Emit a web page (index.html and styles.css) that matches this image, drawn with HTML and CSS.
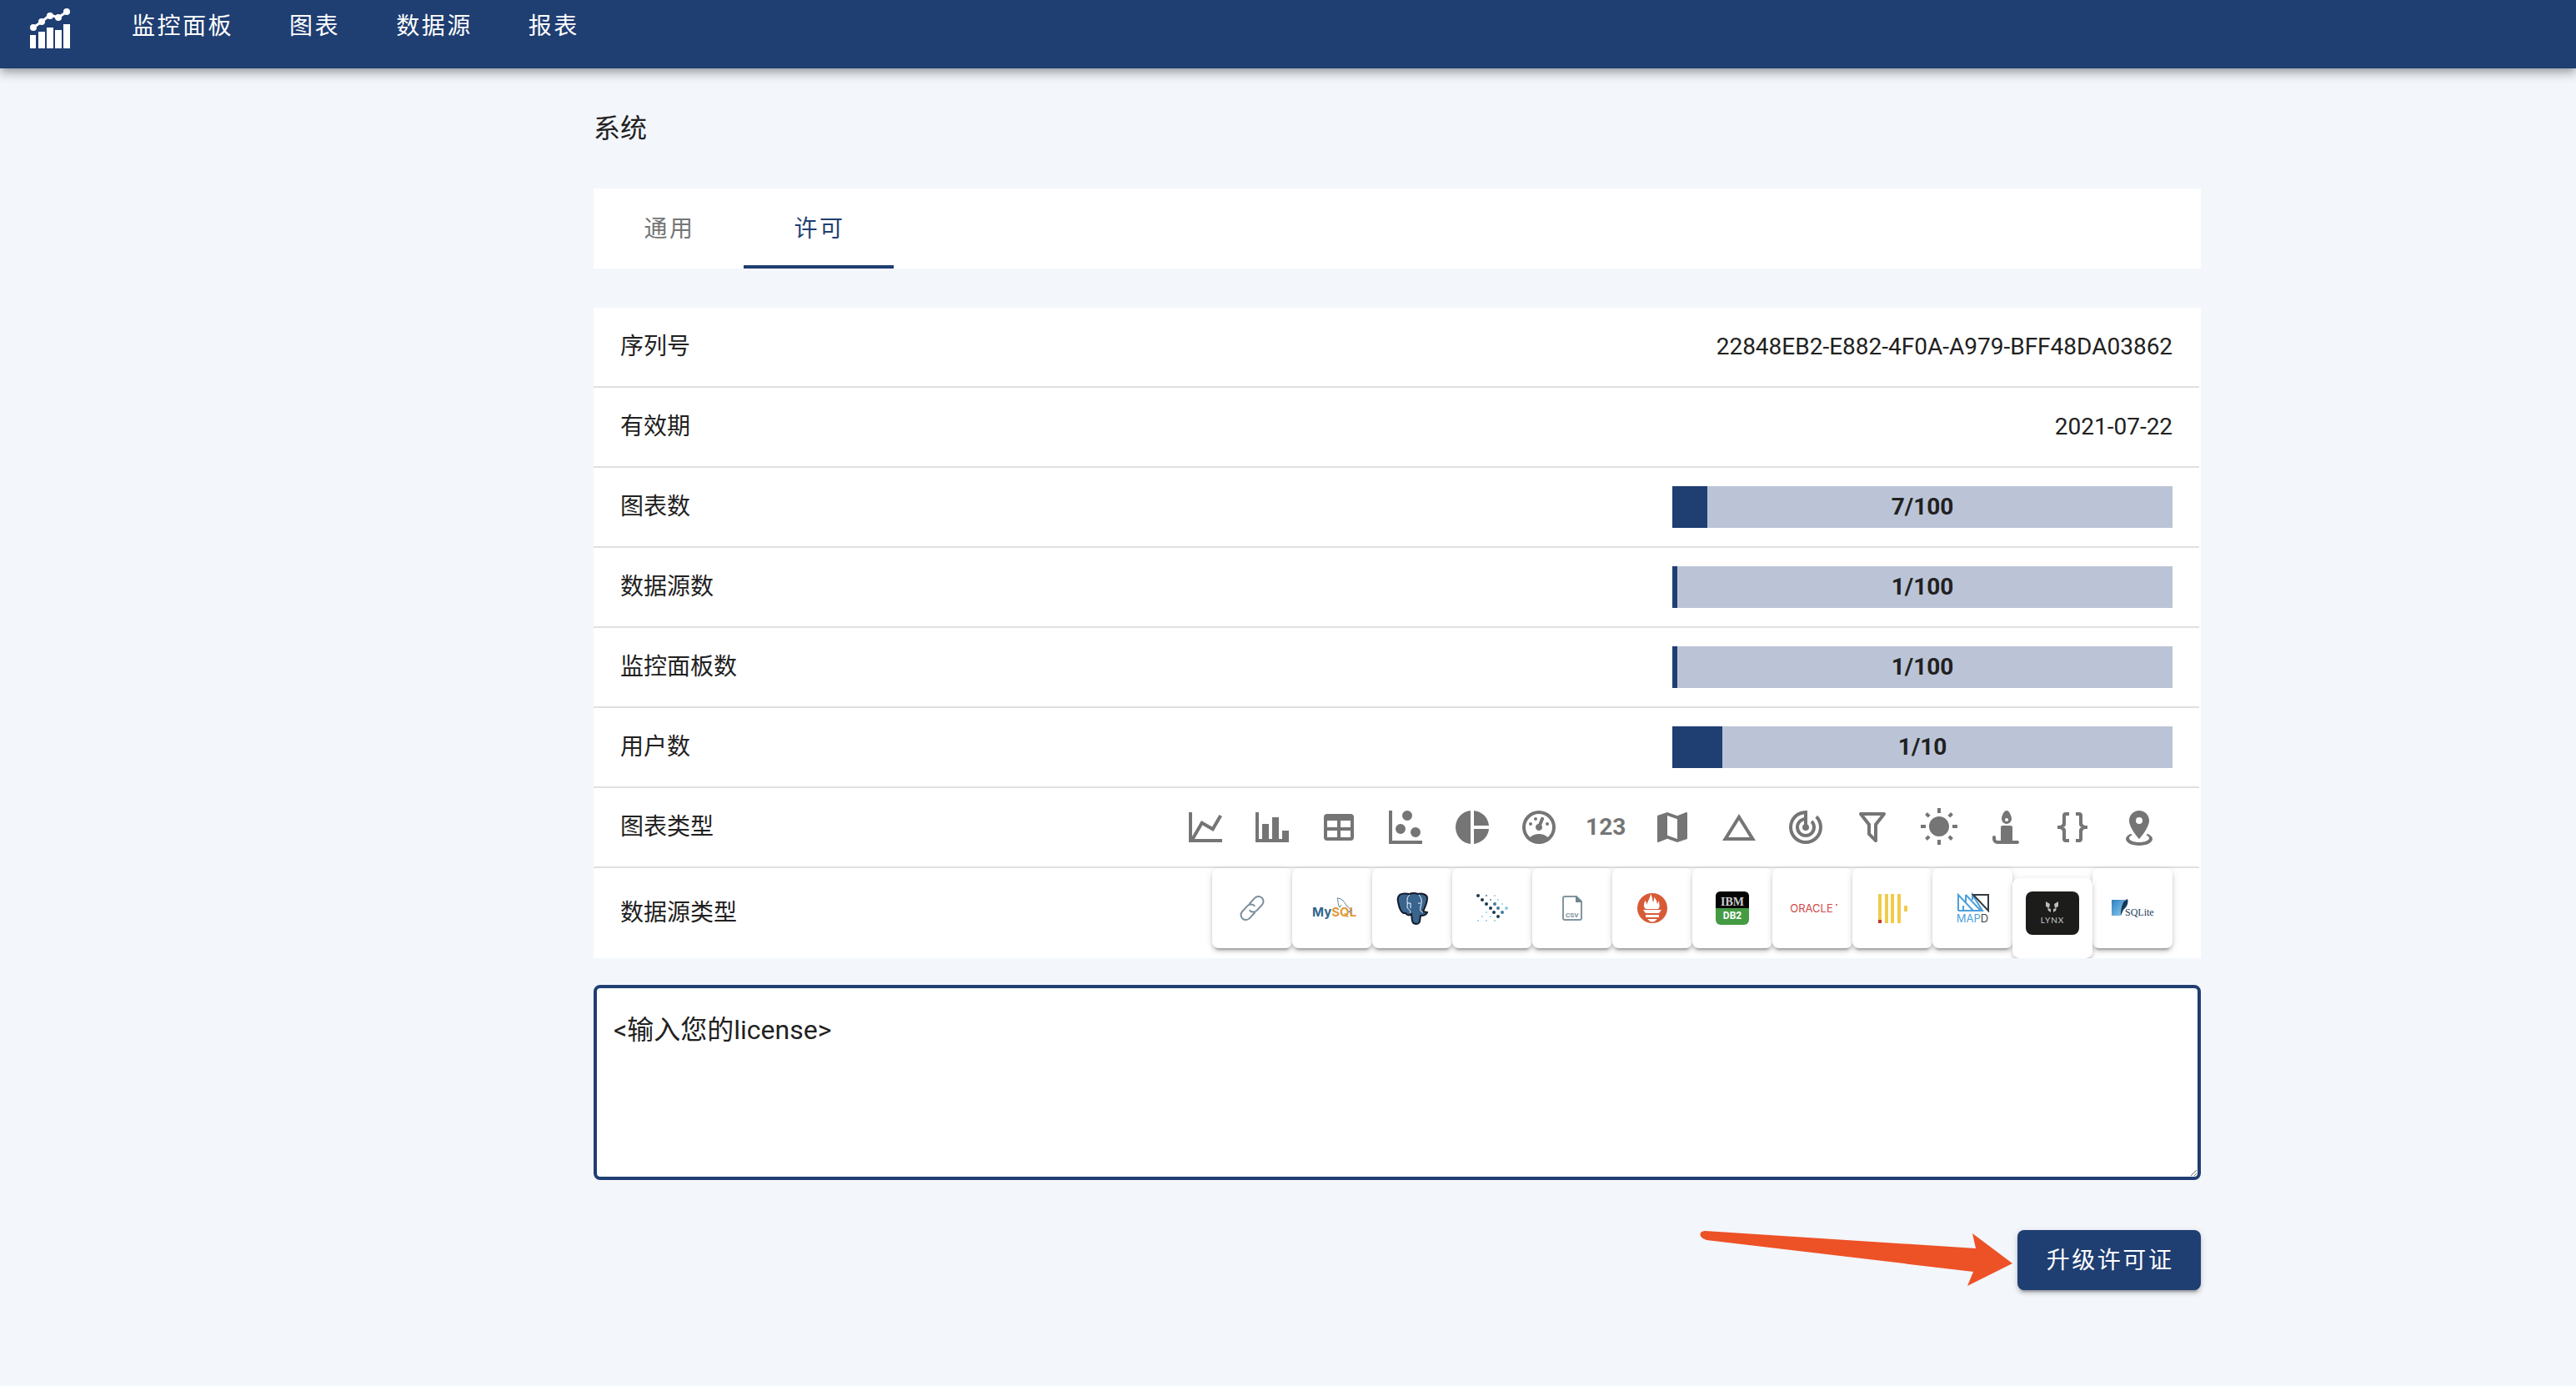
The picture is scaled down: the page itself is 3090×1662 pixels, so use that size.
FILE: index.html
```html
<!DOCTYPE html>
<html lang="zh-CN">
<head>
<meta charset="utf-8">
<meta name="viewport" content="width=device-width, initial-scale=1">
<title>系统</title>
<link rel="stylesheet" href="styles.css">
</head>
<body>
<header class="topbar">
  <a class="logo" href="#" aria-label="首页">
    <svg viewBox="0 0 48 48" fill="#fff"><path d="M0 32h7v16H0zM10 28h8v20h-8zM20 23h8v25h-8zM30 26h8v22h-8zM40 19h8v29h-8z"/><path d="M4 23L14 16L24 8L34 11L44 4" fill="none" stroke="#fff" stroke-width="3"/><circle cx="4" cy="23" r="4"/><circle cx="14" cy="16" r="4"/><circle cx="24" cy="9" r="4"/><circle cx="34" cy="11" r="4"/><circle cx="44" cy="4" r="4"/></svg>
  </a>
  <nav class="nav">
    <a href="#">监控面板</a>
    <a href="#">图表</a>
    <a href="#">数据源</a>
    <a href="#">报表</a>
  </nav>
</header>
<main class="page">
  <h1 class="title">系统</h1>
  <div class="tabs" role="tablist">
    <button class="tab" type="button" role="tab" aria-selected="false">通用</button>
    <button class="tab tab-active" type="button" role="tab" aria-selected="true">许可</button>
  </div>
  <dl class="info">
    <div class="row"><dt>序列号</dt><dd>22848EB2-E882-4F0A-A979-BFF48DA03862</dd></div>
    <div class="row"><dt>有效期</dt><dd>2021-07-22</dd></div>
    <div class="row"><dt>图表数</dt><dd class="meter"><span class="fill" style="width:7%"></span><span class="count">7/100</span></dd></div>
    <div class="row"><dt>数据源数</dt><dd class="meter"><span class="fill" style="width:1%"></span><span class="count">1/100</span></dd></div>
    <div class="row"><dt>监控面板数</dt><dd class="meter"><span class="fill" style="width:1%"></span><span class="count">1/100</span></dd></div>
    <div class="row"><dt>用户数</dt><dd class="meter"><span class="fill" style="width:10%"></span><span class="count">1/10</span></dd></div>
    <div class="row"><dt>图表类型</dt><dd class="charts">
      <svg viewBox="0 0 24 24"><path d="M16,11.78L20.24,4.45L21.97,5.45L16.74,14.5L10.23,10.75L5.46,19H22V21H2V3H4V17.54L9.5,8L16,11.78Z"/></svg>
      <svg viewBox="0 0 24 24"><path d="M22,21H2V3H4V19H6V10H10V19H12V6H16V19H18V14H22V21Z"/></svg>
      <svg viewBox="0 0 24 24"><path d="M5,4H19A2,2 0 0,1 21,6V18A2,2 0 0,1 19,20H5A2,2 0 0,1 3,18V6A2,2 0 0,1 5,4M5,8V12H11V8H5M13,8V12H19V8H13M5,14V18H11V14H5M13,14V18H19V14H13Z"/></svg>
      <svg viewBox="0 0 24 24"><path d="M2,2H4V20H22V22H2V2M9,10A3,3 0 0,1 12,13A3,3 0 0,1 9,16A3,3 0 0,1 6,13A3,3 0 0,1 9,10M13,2A3,3 0 0,1 16,5A3,3 0 0,1 13,8A3,3 0 0,1 10,5A3,3 0 0,1 13,2M18,12A3,3 0 0,1 21,15A3,3 0 0,1 18,18A3,3 0 0,1 15,15A3,3 0 0,1 18,12Z"/></svg>
      <svg viewBox="0 0 24 24"><path d="M11,2V22C5.9,21.5 2,17.2 2,12C2,6.8 5.9,2.5 11,2M13,2V11H22C21.5,6.2 17.8,2.5 13,2M13,13V22C17.7,21.5 21.5,17.8 22,13H13Z"/></svg>
      <svg viewBox="0 0 24 24"><path d="M12,2A10,10 0 0,0 2,12A10,10 0 0,0 12,22A10,10 0 0,0 22,12A10,10 0 0,0 12,2M12,4A8,8 0 0,1 20,12C20,14.4 19,16.5 17.3,18C15.9,16.7 14,16 12,16C10,16 8.2,16.7 6.7,18C5,16.5 4,14.4 4,12A8,8 0 0,1 12,4M14,5.89C13.62,5.9 13.26,6.15 13.1,6.54L11.81,9.77L11.71,10C11,10.13 10.41,10.6 10.14,11.26C9.73,12.29 10.23,13.45 11.26,13.86C12.29,14.27 13.45,13.77 13.86,12.74C14.12,12.08 14,11.32 13.57,10.76L13.67,10.5L14.96,7.29L14.97,7.26C15.17,6.75 14.92,6.17 14.41,5.96C14.28,5.91 14.15,5.89 14,5.89M10,6A1,1 0 0,0 9,7A1,1 0 0,0 10,8A1,1 0 0,0 11,7A1,1 0 0,0 10,6M7,9A1,1 0 0,0 6,10A1,1 0 0,0 7,11A1,1 0 0,0 8,10A1,1 0 0,0 7,9M17,9A1,1 0 0,0 16,10A1,1 0 0,0 17,11A1,1 0 0,0 18,10A1,1 0 0,0 17,9Z"/></svg>
      <span class="digits">123</span>
      <svg viewBox="0 0 24 24"><path d="M20.5,3L20.34,3.03L15,5.1L9,3L3.36,4.9C3.15,4.97 3,5.15 3,5.38V20.5A0.5,0.5 0 0,0 3.5,21L3.66,20.97L9,18.9L15,21L20.64,19.1C20.85,19.03 21,18.85 21,18.62V3.5A0.5,0.5 0 0,0 20.5,3M15,19L9,16.89V5L15,7.11V19Z"/></svg>
      <svg viewBox="0 0 24 24"><path d="M12,7.77L18.39,18H5.61L12,7.77M12,4L2,20H22L12,4Z"/></svg>
      <svg viewBox="0 0 24 24"><path d="M19.07,4.93L17.66,6.34C19.1,7.79 20,9.79 20,12A8,8 0 0,1 12,20A8,8 0 0,1 4,12C4,7.92 7.05,4.56 11,4.07V6.09C8.16,6.57 6,9.03 6,12A6,6 0 0,0 12,18A6,6 0 0,0 18,12C18,10.34 17.33,8.84 16.24,7.76L14.83,9.17C15.55,9.9 16,10.9 16,12A4,4 0 0,1 12,16A4,4 0 0,1 8,12C8,10.14 9.28,8.59 11,8.14V10.28C10.4,10.63 10,11.26 10,12A2,2 0 0,0 12,14A2,2 0 0,0 14,12C14,11.26 13.6,10.62 13,10.28V2H12A10,10 0 0,0 2,12A10,10 0 0,0 12,22A10,10 0 0,0 22,12C22,9.24 20.88,6.74 19.07,4.93Z"/></svg>
      <svg viewBox="0 0 24 24"><path d="M15,19.88C15.04,20.18 14.94,20.5 14.71,20.71C14.32,21.1 13.69,21.1 13.3,20.71L9.29,16.7C9.06,16.47 8.96,16.16 9,15.87V10.75L4.21,4.62C3.87,4.19 3.95,3.56 4.38,3.22C4.57,3.08 4.78,3 5,3H19C19.22,3 19.43,3.08 19.62,3.22C20.05,3.56 20.13,4.19 19.79,4.62L15,10.75V19.88M7.04,5L11,10.06V15.58L13,17.58V10.05L16.96,5H7.04Z"/></svg>
      <svg viewBox="0 0 24 24"><path d="M3.55,18.54L4.96,19.95L6.76,18.16L5.34,16.74M11,22.45C11.32,22.45 13,22.45 13,22.45V19.5H11M12,5.5A6,6 0 0,0 6,11.5A6,6 0 0,0 12,17.5A6,6 0 0,0 18,11.5C18,8.18 15.31,5.5 12,5.5M20,12.5H23V10.5H20M17.24,18.16L19.04,19.95L20.45,18.54L18.66,16.74M20.45,4.46L19.04,3.05L17.24,4.84L18.66,6.26M13,0.55H11V3.5H13M4,10.5H1V12.5H4M6.76,4.84L4.96,3.05L3.55,4.46L5.34,6.26L6.76,4.84Z"/></svg>
      <svg viewBox="0 0 24 24"><path d="M12.5,2C10.84,2 9.5,5.34 9.5,7A3,3 0 0,0 12.5,10A3,3 0 0,0 15.5,7C15.5,5.34 14.16,2 12.5,2M12.5,6.5A1,1 0 0,1 13.5,7.5A1,1 0 0,1 12.5,8.5A1,1 0 0,1 11.5,7.5A1,1 0 0,1 12.5,6.5M10,11A1,1 0 0,0 9,12V20H7A1,1 0 0,1 6,19V18A1,1 0 0,0 5,17A1,1 0 0,0 4,18V19A3,3 0 0,0 7,22H19A1,1 0 0,0 20,21A1,1 0 0,0 19,20H16V12A1,1 0 0,0 15,11H10Z"/></svg>
      <svg viewBox="0 0 24 24"><path d="M8,3A2,2 0 0,0 6,5V9A2,2 0 0,1 4,11H3V13H4A2,2 0 0,1 6,15V19A2,2 0 0,0 8,21H10V19H8V14A2,2 0 0,0 6,12A2,2 0 0,0 8,10V5H10V3M16,3A2,2 0 0,1 18,5V9A2,2 0 0,0 20,11H21V13H20A2,2 0 0,0 18,15V19A2,2 0 0,1 16,21H14V19H16V14A2,2 0 0,1 18,12A2,2 0 0,1 16,10V5H14V3H16Z"/></svg>
      <svg viewBox="0 0 24 24"><path d="M12,2C15.31,2 18,4.66 18,7.95C18,12.41 12,19 12,19C12,19 6,12.41 6,7.95C6,4.66 8.69,2 12,2M12,6A2,2 0 0,0 10,8A2,2 0 0,0 12,10A2,2 0 0,0 14,8A2,2 0 0,0 12,6M20,19C20,21.21 16.42,23 12,23C7.58,23 4,21.21 4,19C4,17.71 5.22,16.56 7.11,15.83L7.75,16.74C6.67,17.19 6,17.81 6,18.5C6,19.88 8.69,21 12,21C15.31,21 18,19.88 18,18.5C18,17.81 17.33,17.19 16.25,16.74L16.89,15.83C18.78,16.56 20,17.71 20,19Z"/></svg>
    </dd></div>
    <div class="row row-sources"><dt>数据源类型</dt><dd class="sources">
      <span class="card"><svg viewBox="0 0 96 96" fill="none" stroke="#7b909c" stroke-width="2" stroke-linecap="round"><g transform="rotate(-47 48 48)"><path d="M46 54H37a6 6 0 0 1 0-12H46a6 6 0 0 1 6 6"/><path d="M50 42H59a6 6 0 0 1 0 12H50a6 6 0 0 1-6-6"/></g></svg></span>
      <span class="card"><svg viewBox="0 0 96 96"><text class="t-mysql" x="24" y="58"><tspan fill="#31658c">My</tspan><tspan fill="#e39a3b">SQL</tspan></text><path d="M54 36c6 0 9 5 11 9c3 2 5 4 6 6l-3 1l3 3M54 36c2 4 0 7 3 11l2-3" fill="none" stroke="#577f9c"/></svg></span>
      <span class="card"><svg viewBox="0 0 96 96"><path d="M33 32c4-3 9-1 12-1c4-2 7-1 10 0c4-1 11 0 11 5c0 6-3 11-5 16l5 1c-1 4-5 4-8 4c-1 5 0 10-5 10c-6 0-5-5-6-12c-2 2-5 2-7-1c-6 1-8-8-9-14c-1-4 0-6 2-8Z" fill="#39648e" stroke="#141b2a" stroke-width="2"/><path d="M45 32c-5 4-2 9-3 14c0 4 4 3 4 8M56 32c5 6 3 10 2 15c-1 4 0 5 3 6M42 42h4v6M55 42h3" fill="none" stroke="#fff"/></svg></span>
      <span class="card"><svg viewBox="0 0 96 96"><g fill="#1c3a50"><circle cx="31" cy="33" r="2"/><circle cx="36" cy="38" r="2"/><circle cx="41" cy="43" r="2"/><circle cx="46" cy="48" r="2"/><circle cx="50" cy="53" r="2"/><circle cx="55" cy="58" r="2"/></g><g fill="#3f7da2"><circle cx="41" cy="33" r="1"/><circle cx="46" cy="38" r="1"/><circle cx="51" cy="43" r="2"/><circle cx="55" cy="48" r="2"/><circle cx="60" cy="53" r="2"/></g><g fill="#8ccbe2"><circle cx="51" cy="33" r="1"/><circle cx="55" cy="38" r="1"/><circle cx="60" cy="43" r="1"/><circle cx="65" cy="48" r="2"/><circle cx="41" cy="53" r="1"/><circle cx="36" cy="58" r="1"/><circle cx="46" cy="58" r="1"/><circle cx="31" cy="63" r="1"/><circle cx="41" cy="63" r="1"/><circle cx="51" cy="63" r="1"/></g></svg></span>
      <span class="card"><svg viewBox="0 0 96 96"><path d="M39 34h14l6 6v20q0 2-2 2H39q-2 0-2-2V36q0-2 2-2Z" fill="#fff" stroke="#8195a1" stroke-width="2"/><path d="M52 33l8 8h-8Z" fill="#6e8592"/><text class="t-csv" x="40" y="59">CSV</text></svg></span>
      <span class="card"><svg viewBox="0 0 96 96"><circle cx="48" cy="48" r="18" fill="#d75b37"/><path d="M40 49c-4-4-1-7-1-10c2 1 2 3 3 5c0-5 3-6 4-13c2 3 2 7 3 10c1-2 1-4 1-6c4 4 3 5 4 8l2-4c0 5 2 7-1 10ZM37 50h22l-3 4H40ZM40 56h16v3H40ZM42 61h12q-6 7-12 0Z" fill="#fff"/></svg></span>
      <span class="card"><svg viewBox="0 0 96 96"><rect x="28" y="28" width="40" height="40" rx="6" fill="#449b43"/><path d="M28 48V34q0-6 6-6h28q6 0 6 6v14Z" fill="#050505"/><text class="t-ibm" x="48" y="45">IBM</text><text class="t-db2" x="48" y="61">DB2</text></svg></span>
      <span class="card"><svg viewBox="0 0 96 96"><text class="t-oracle" x="47" y="53">ORACLE</text><circle cx="77" cy="44" r="1" fill="#d24a48"/></svg></span>
      <span class="card"><svg viewBox="0 0 96 96"><path d="M31 31h4v31h-4zM39 31h4v35h-4zM46 31h4v35h-4zM54 31h4v35h-4zM62 45h4v7h-4z" fill="#f0cb4c"/><path d="M31 62h4v4h-4z" fill="#c23a2c"/></svg></span>
      <span class="card"><svg viewBox="0 0 96 96"><path d="M31 51V32l18 19H31M37 51V45M40 32l18 19H49M48 38v-6l12 19H49M40 32v9" fill="none" stroke="#4d9fdc" stroke-width="2"/><path d="M49 32h18v19Z" fill="#fff" stroke="#333a40" stroke-width="2"/><text class="t-mapd" x="48" y="65">MAP<tspan fill="#444">D</tspan></text></svg></span>
      <span class="card card-low"><svg viewBox="0 0 96 96"><rect x="16" y="16" width="64" height="52" rx="8" fill="#1c1c1a"/><path d="M40 28l5 3l-1 5l-4-2ZM55 28l-5 3l1 5l4-2ZM42 36l4 1v4l-3-2ZM53 36l-4 1v4l3-2Z" fill="#bbb"/><text class="t-lynx" x="48" y="54">LYNX</text></svg></span>
      <span class="card"><svg viewBox="0 0 96 96"><defs><linearGradient id="lite" x2="1" y2="1"><stop stop-color="#2e7fc0"/><stop offset="1" stop-color="#8dcdf0"/></linearGradient></defs><path d="M23 38h16l-5 19H23Z" fill="url(#lite)"/><path d="M34 57c0-10 2-18 8-20c2 5-2 11-5 13Z" fill="#12395b"/><text class="t-sqlite" x="39" y="57">SQLite</text></svg></span>
    </dd></div>
  </dl>
  <textarea class="license" aria-label="license">&lt;输入您的license&gt;</textarea>
  <div class="actions">
    <svg class="arrow" viewBox="0 0 376 68" aria-hidden="true"><path d="M6 1L331 22L327 4L375 40L321 67L328 50L8 12Q-3 8 2 2Z" fill="#ed5126"/></svg>
    <button class="upgrade" type="button">升级许可证</button>
  </div>
</main>
</body>
</html>
```
FILE: styles.css
```css
* { box-sizing: border-box; }
body {
  margin: 0;
  min-height: 100vh;
  background: #f3f6fb;
  color: #212121;
  font-family: Roboto, "Noto Sans CJK SC", sans-serif;
  font-size: 28px;
  line-height: 40px;
}
button { padding: 2px 0 0 2px; border: 0; font: inherit; letter-spacing: 0.09em; cursor: pointer; }
.topbar {
  display: flex;
  align-items: flex-start;
  gap: 74px;
  height: 82px;
  padding: 10px 36px;
  background: #1f3e72;
  box-shadow: 0 4px 8px -2px rgba(0,0,0,.2), 0 8px 10px rgba(0,0,0,.14), 0 2px 20px rgba(0,0,0,.12);
}
.logo, .logo svg { display: block; width: 48px; height: 48px; }
.nav { display: flex; gap: 67px; line-height: 44px; }
.nav a { color: #fff; text-decoration: none; letter-spacing: 0.09em; }
.page {
  margin: 0 14.56% 0 23.04%;
  padding-top: 52px;
}
.title { margin: 0; font-size: 32px; font-weight: 400; line-height: 40px; }
.tabs { display: flex; margin: 52px 0 47px; background: #fff; }
.tab { width: 180px; height: 96px; background: none; color: #757575; }
.tab-active { color: #1f3e72; box-shadow: inset 0 -4px #1f3e72; }
.info { margin: 0; padding-right: 2px; background: #fff; }
.row {
  display: flex;
  align-items: center;
  justify-content: space-between;
  height: 96px;
  padding: 0 32px;
  border-bottom: 2px solid #e0e0e0;
}
.row dd { margin: 0; }
.row .meter { position: relative; width: 600px; height: 50px; background: #bbc4d6; text-align: center; font-weight: 700; }
.fill { position: absolute; top: 0; bottom: 0; left: 0; background: #1f3e72; }
.count { position: relative; line-height: 50px; }
.charts { display: flex; gap: 32px; padding-right: 16px; }
.charts svg { width: 48px; height: 48px; fill: #757575; }
.digits { width: 48px; color: #757575; font-family: "Liberation Sans Narrow", Roboto, sans-serif; font-size: 28px; font-weight: 700; line-height: 48px; text-align: center; }
.row-sources { height: 108px; border: 0; }
.sources { display: flex; height: 108px; }
.card {
  width: 96px;
  height: 96px;
  border-radius: 8px;
  background: #fff;
  box-shadow: 0 6px 2px -4px rgba(0,0,0,.2), 0 4px 4px rgba(0,0,0,.14), 0 2px 10px rgba(0,0,0,.12);
}
.card-low { align-self: flex-end; clip-path: inset(-12px -6px 0); }
.card svg { display: block; width: 96px; height: 96px; }
.t-mysql { font: 700 15px Inter, sans-serif; }
.t-csv { font: 700 8px Roboto, sans-serif; fill: #7b909c; }
.t-ibm { font: 700 14px "Liberation Serif", serif; fill: #ccc; text-anchor: middle; }
.t-db2 { font: 700 12px Roboto, sans-serif; fill: #fff; text-anchor: middle; }
.t-oracle { font: 400 13px Inter, sans-serif; fill: #d24a48; text-anchor: middle; }
.t-mapd { font: 400 13px Inter, sans-serif; fill: #4d9fdc; text-anchor: middle; }
.t-lynx { font: 400 10px Lato, sans-serif; letter-spacing: 1px; fill: #ccc; text-anchor: middle; }
.t-sqlite { font: 400 12px "Liberation Serif", serif; fill: #1b3e5c; }
.license {
  display: block;
  width: 100%;
  height: 234px;
  margin-top: 32px;
  padding: 30px 20px;
  border: 4px solid #1f3e72;
  border-radius: 8px;
  outline: 0;
  background: #fff;
  color: #212121;
  font: inherit;
  font-size: 32px;
  resize: vertical;
}
.actions { position: relative; display: flex; justify-content: flex-end; margin-top: 60px; }
.arrow { position: absolute; right: 225px; top: 0; width: 376px; height: 68px; }
.upgrade {
  width: 220px;
  height: 72px;
  border-radius: 8px;
  background: #1f3e72;
  color: #fff;
  box-shadow: 0 6px 2px -4px rgba(0,0,0,.2), 0 4px 4px rgba(0,0,0,.14), 0 2px 10px rgba(0,0,0,.12);
}
```
